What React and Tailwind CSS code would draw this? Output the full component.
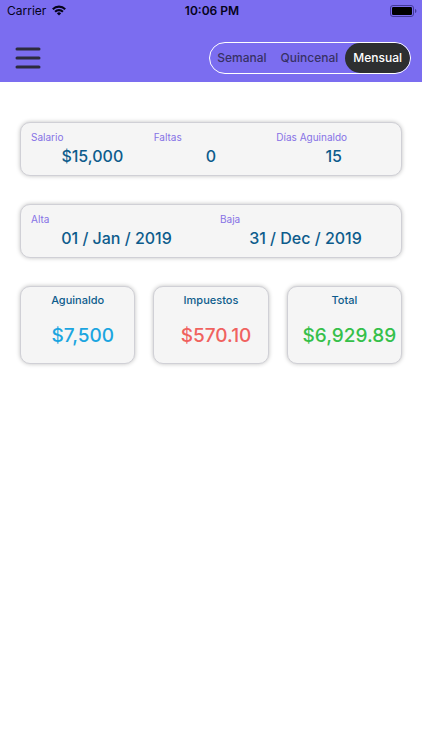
import { useState } from 'react';

const PERIODS = ['Semanal', 'Quincenal', 'Mensual'];

const CARD = 'rounded-[10px] border border-[#d0d0d6] bg-[#f5f5f5] shadow-[0_0_4px_rgba(0,0,0,0.25)]';

function StatusBar() {
  return (
    <div className="grid h-[22px] grid-cols-3 items-center pl-[7px] pr-[5px] text-[#05031a]">
      <div className="flex items-center gap-[6px]">
        <span className="text-[12px] leading-[22px]">Carrier</span>
        <svg viewBox="0 0 14 12" className="h-[12px] w-[14px]" fill="none" stroke="currentColor" strokeWidth="2.1" aria-hidden="true">
          <path d="M0.8 4.2a8.8 8.8 0 0 1 12.4 0" />
          <path d="M3.1 6.7a5.5 5.5 0 0 1 7.8 0" />
          <path d="M7 10.6L4.9 8.4a3 3 0 0 1 4.2 0z" fill="currentColor" stroke="none" />
        </svg>
      </div>
      <span className="text-center text-[12px] font-semibold leading-[22px]">10:06 PM</span>
      <svg viewBox="0 0 27 12" className="h-[12px] w-[27px] justify-self-end" aria-hidden="true">
        <rect x="0.5" y="0.5" width="23" height="11" rx="2.5" fill="none" stroke="#43399a" />
        <rect x="2" y="2" width="20" height="8" rx="1.2" fill="#000" />
        <path d="M25 4v4c0.9-0.3 1.4-1.1 1.4-2s-0.5-1.7-1.4-2z" fill="#43399a" />
      </svg>
    </div>
  );
}

function Field({ id, label, value, onChange, inset }) {
  return (
    <div className="min-w-0">
      <label htmlFor={id} className="block text-[10px] leading-[14px] text-[#8672e6]">{label}</label>
      <input
        id={id}
        value={value}
        onChange={(e) => onChange(e.target.value)}
        className={`block h-6 w-full bg-transparent text-center text-[16px] font-medium text-[#0d5c8c] outline-none ${inset ? 'pl-[8px]' : ''}`}
      />
    </div>
  );
}

function Result({ title, value, color }) {
  return (
    <div className={`${CARD} h-[78px] pt-[6px] text-center`}>
      <h2 className="text-[11px] font-medium leading-[14px] text-[#0d5c8c]">{title}</h2>
      <p className={`mt-[15px] pl-[10px] text-[19px] font-medium leading-[28px] ${color}`}>{value}</p>
    </div>
  );
}

export default function App() {
  const [period, setPeriod] = useState('Mensual');
  const [form, setForm] = useState({
    salario: '$15,000',
    faltas: '0',
    dias: '15',
    alta: '01 / Jan / 2019',
    baja: '31 / Dec / 2019',
  });

  const update = (key) => (value) => setForm({ ...form, [key]: value });

  return (
    <div className="min-h-screen bg-white font-[Inter,'Liberation_Sans',sans-serif]">
      <header className="bg-[#7b6df0] pb-2">
        <StatusBar />
        <div className="mt-5 flex items-center justify-between pl-[15px] pr-[11px]">
          <button aria-label="Menú" className="text-[#2c2b3e]">
            <svg viewBox="0 0 26 22" className="h-[22px] w-[26px]" stroke="currentColor" strokeWidth="3" strokeLinecap="round">
              <path d="M2 2h22M2 11h22M2 20h22" />
            </svg>
          </button>
          <div className="flex h-8 overflow-hidden rounded-full border border-white">
            {PERIODS.map((name) => (
              <button
                key={name}
                aria-pressed={period === name}
                onClick={() => setPeriod(name)}
                className={`text-[12px] font-medium ${period === name ? 'rounded-full bg-[#2d2f30] px-2 text-white' : 'px-[7px] text-[#373165]'}`}
              >
                {name}
              </button>
            ))}
          </div>
        </div>
      </header>

      <main className="flex flex-col gap-7 px-5 pt-10">
        <section className={`${CARD} grid h-[54px] grid-cols-3 gap-2 px-[10px] pt-[7px]`}>
          <Field id="salario" label="Salario" value={form.salario} onChange={update('salario')} inset />
          <Field id="faltas" label="Faltas" value={form.faltas} onChange={update('faltas')} />
          <Field id="dias" label="Días Aguinaldo" value={form.dias} onChange={update('dias')} />
        </section>

        <section className={`${CARD} grid h-[54px] grid-cols-2 gap-[18px] px-[10px] pt-[7px]`}>
          <Field id="alta" label="Alta" value={form.alta} onChange={update('alta')} />
          <Field id="baja" label="Baja" value={form.baja} onChange={update('baja')} />
        </section>

        <section className="grid grid-cols-3 gap-[18px]">
          <Result title="Aguinaldo" value="$7,500" color="text-[#1ba5e0]" />
          <Result title="Impuestos" value="$570.10" color="text-[#f0625f]" />
          <Result title="Total" value="$6,929.89" color="text-[#35c04a]" />
        </section>
      </main>
    </div>
  );
}
